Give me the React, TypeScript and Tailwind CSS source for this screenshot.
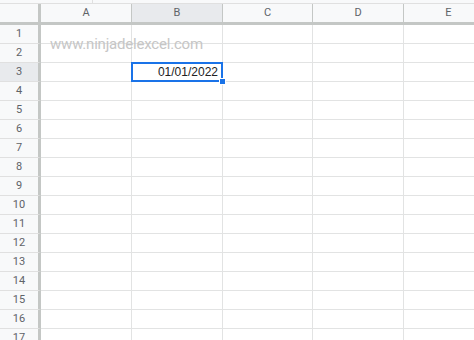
const cols = [
  { label: "A", w: "w-[91px]" },
  { label: "B", w: "w-[91px]" },
  { label: "C", w: "w-[90px]" },
  { label: "D", w: "w-[91px]" },
  { label: "E", w: "w-[90px]" },
];

const rows = Array.from({ length: 17 }, (_, i) => i + 1);

export default function App() {
  return (
    <div className="relative w-[474px] h-[340px] overflow-hidden bg-white font-['Roboto','Liberation_Sans',Arial,sans-serif]">
      {/* top strip */}
      <div className="flex h-[4px] border-b border-[#e0e0e0] bg-[#f8f9fa]">
        <div className="w-[93px] border-r border-[#e0e0e0]" />
      </div>

      {/* column headers */}
      <div className="flex h-[21px]">
        <div className="w-[41px] shrink-0 bg-[#f8f9fa] border-r-[3px] border-b-[3px] border-[#c4c7c5]" />
        {cols.map((c) => (
          <div
            key={c.label}
            className={`${c.w} shrink-0 flex items-center justify-center border-r border-b-[3px] border-r-[#c4c7c5] border-b-[#c4c7c5] text-[11px] text-[#5f6368] ${
              c.label === "B" ? "bg-[#e8eaed]" : "bg-[#f8f9fa]"
            }`}
          >
            {c.label}
          </div>
        ))}
      </div>

      {/* rows */}
      {rows.map((r) => (
        <div key={r} className="flex h-[19px]">
          <div
            className={`w-[41px] shrink-0 flex items-center justify-center border-r-[3px] border-r-[#c4c7c5] border-b border-b-[#e0e0e0] text-[11px] text-[#5f6368] ${
              r === 3 ? "bg-[#e8eaed]" : "bg-[#f8f9fa]"
            }`}
          >
            {r}
          </div>
          {cols.map((c) => (
            <div
              key={c.label}
              className={`${c.w} shrink-0 relative border-r border-b border-[#e2e3e3]`}
            >
              {r === 3 && c.label === "B" && (
                <>
                  <div className="absolute -left-[1px] -top-[1px] w-[92px] h-[20px] border-2 border-[#1a73e8]" />
                  <div className="absolute right-[4px] top-0 h-full flex items-center font-['Liberation_Sans',Arial,sans-serif] text-[12px] text-[#222222]">
                    01/01/2022
                  </div>
                  <div className="absolute z-10 -right-[4px] -bottom-[4px] w-[7px] h-[7px] bg-[#1a73e8] border border-white" />
                </>
              )}
            </div>
          ))}
        </div>
      ))}

      {/* watermark */}
      <div className="absolute left-[50px] top-[33px] text-[15px] tracking-[-0.2px] text-[#c6c6c6] pointer-events-none">
        www.ninjadelexcel.com
      </div>
    </div>
  );
}
